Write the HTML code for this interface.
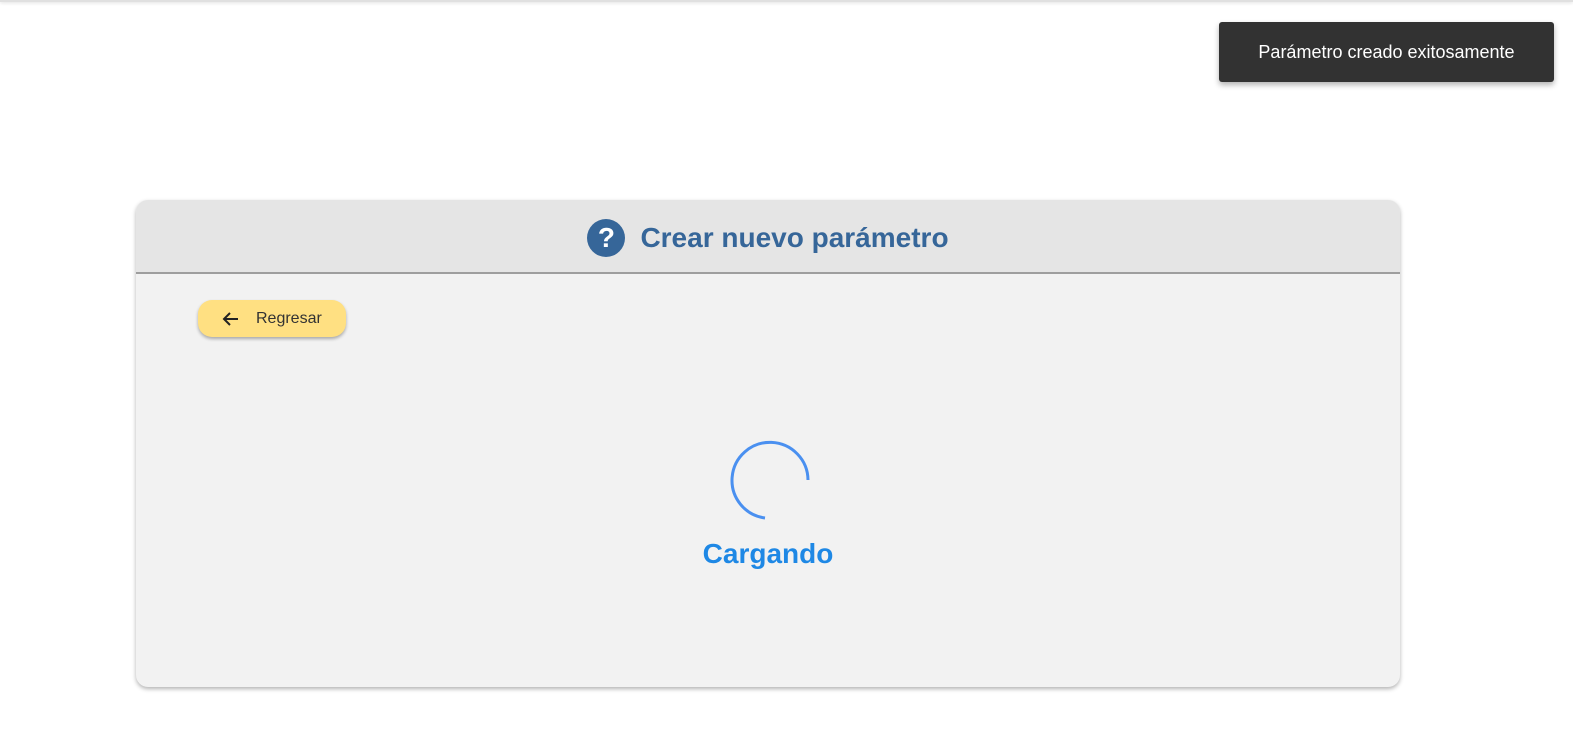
<!DOCTYPE html>
<html><head><style>
body{margin:0;width:1573px;height:755px;background:#fff;position:relative;overflow:hidden;font-family:"Liberation Sans",sans-serif}
.top{position:absolute;left:0;top:0;width:100%;height:2px;background:#e0e0e0;box-shadow:0 1px 3px rgba(0,0,0,.15)}
.toast{position:absolute;left:1219px;top:22px;width:335px;height:60px;background:#323232;color:#fff;font-size:18px;display:flex;align-items:center;justify-content:center;border-radius:3px;box-shadow:0 3px 6px rgba(0,0,0,.3)}
.card{position:absolute;left:136px;top:200px;width:1264px;height:487px;background:#f2f2f2;border-radius:12px;box-shadow:0 2px 4px rgba(0,0,0,.3);overflow:hidden}
.hdr{height:72px;background:#e5e5e5;border-bottom:2px solid #9e9e9e;display:flex;align-items:center;justify-content:center;color:#366699;font-weight:bold;font-size:28px;padding-top:4px;box-sizing:border-box;height:74px}
.q{width:38px;height:38px;border-radius:50%;background:#366699;color:#fff;display:inline-flex;align-items:center;justify-content:center;font-size:28px;margin-right:15px}
.btn{position:absolute;left:62px;top:100px;width:148px;height:37px;background:#ffe082;border-radius:14px;box-shadow:0 2px 3px rgba(0,0,0,.3);display:flex;align-items:center;font-size:16px;color:#333}
.cg{position:absolute;left:0;width:100%;top:338px;text-align:center;color:#1e88e5;font-weight:bold;font-size:28px}
</style></head><body>
<div class="top"></div>
<div class="toast">Parámetro creado exitosamente</div>
<div class="card">
<div class="hdr"><span class="q">?</span>Crear nuevo parámetro</div>
<div class="btn"><svg width="20" height="20" viewBox="0 0 20 20" style="margin-left:23px;margin-right:15px"><path d="M17 10H4M9 4L3 10L9 16" stroke="#222" stroke-width="2" fill="none"/></svg>Regresar</div>
<svg style="position:absolute;left:592px;top:238px" width="84" height="84" viewBox="0 0 84 84"><path d="M80 42 A38 38 0 1 0 37 80" stroke="#4a90f0" stroke-width="3" fill="none"/></svg>
<div class="cg">Cargando</div>
</div>
</body></html>
